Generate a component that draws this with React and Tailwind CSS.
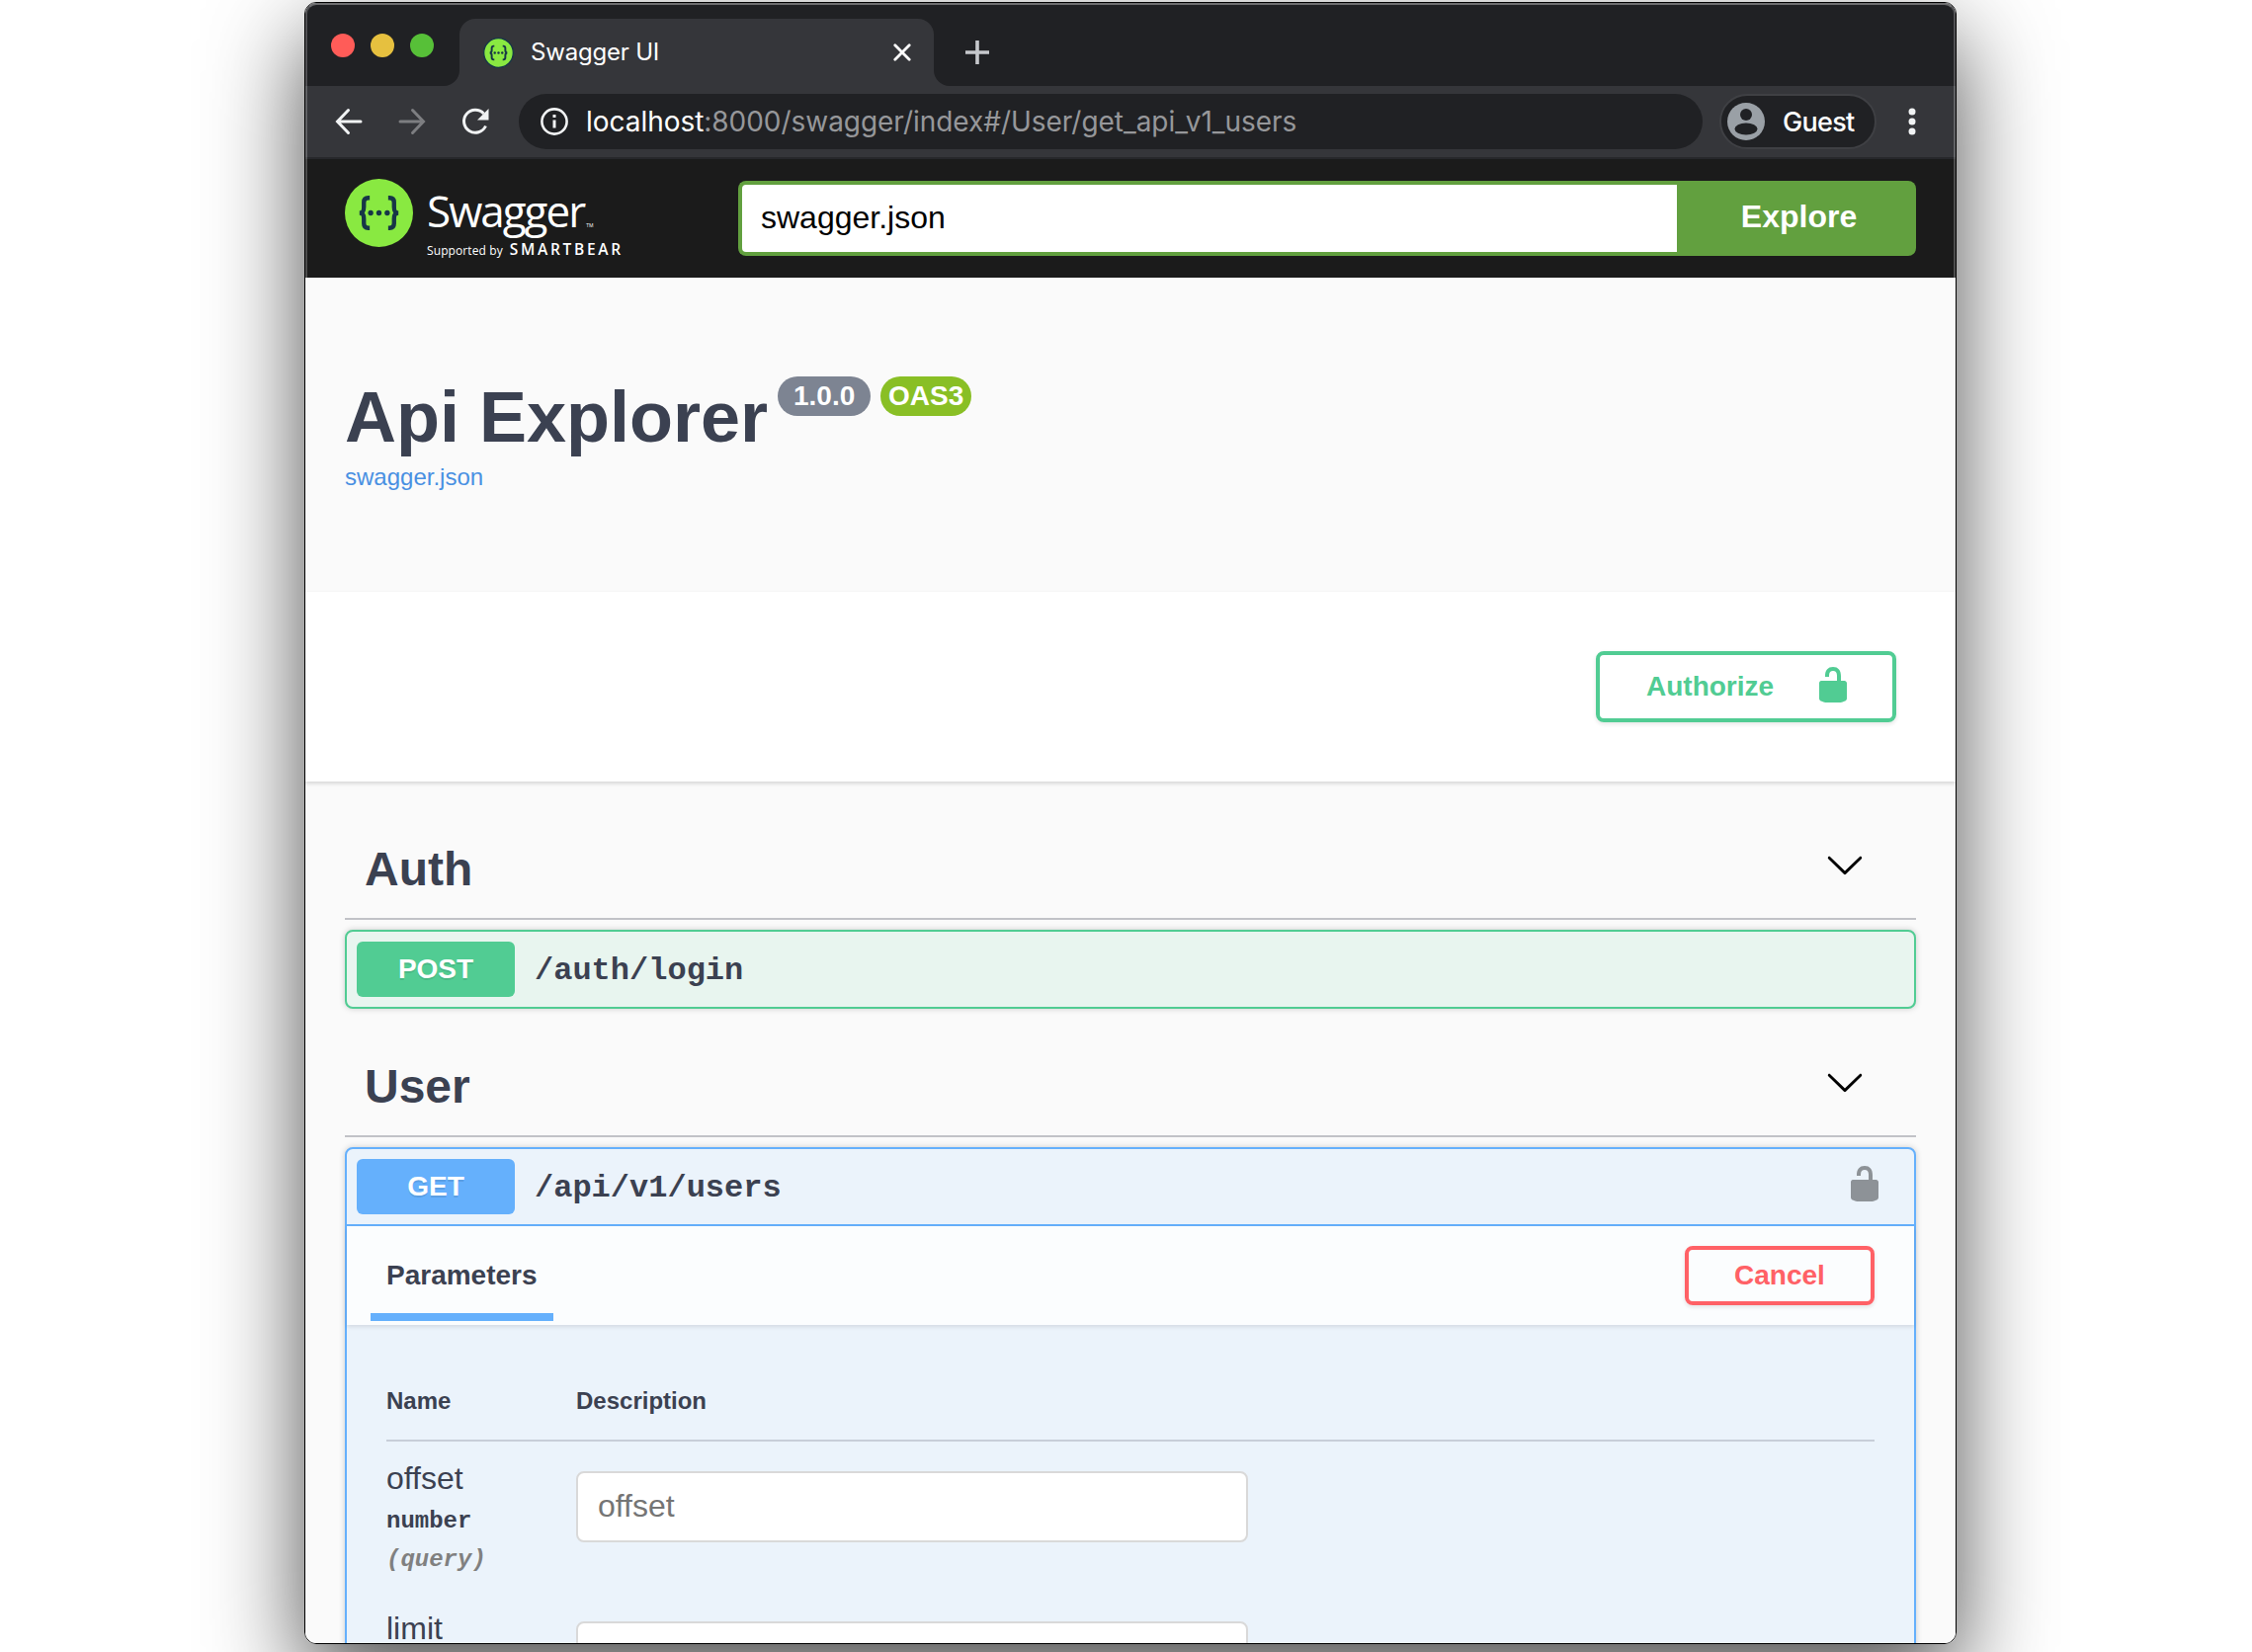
const LOCK_PATH =
  "M15.8 8H14V5.6C14 2.703 12.665 1 10 1 7.334 1 6 2.703 6 5.6V6h2v-.801C8 3.754 8.797 3 10 3c1.203 0 2 .754 2 2.199V8H4c-.553 0-1 .646-1 1.199V17c0 .549.428 1.139.951 1.307l1.197.387C5.672 18.861 6.55 19 7.1 19h5.8c.549 0 1.428-.139 1.951-.307l1.196-.387c.524-.167.953-.757.953-1.306V9.199C17 8.646 16.352 8 15.8 8z";

function Lock({ className }) {
  return (
    <svg viewBox="0 0 20 20" className={className} fill="currentColor">
      <path d={LOCK_PATH} />
    </svg>
  );
}

function Chevron() {
  return (
    <svg viewBox="0 0 20 20" className="mb-[10px] size-10" fill="black">
      <path d="M17.418 6.109c.272-.268.709-.268.979 0s.271.701 0 .969l-7.908 7.83c-.27.268-.707.268-.979 0l-7.908-7.83c-.27-.268-.27-.701 0-.969.271-.268.709-.268.979 0L10 13.25l7.418-7.141z" />
    </svg>
  );
}

function BraceMark({ className, ring }) {
  return (
    <svg viewBox="0 0 70 70" className={className}>
      <circle cx="35" cy="35" r={ring ? 33.5 : 35} fill="#89e941" stroke={ring ? "#173647" : "none"} strokeWidth={ring ? 3 : 0} />
      <g fill="none" stroke="#173647" strokeWidth="4.400">
        <path d="M25.5 19.500h-1.500c-3.500 0-4.500 2-4.500 4.500v5c0 4-1 6-4.500 6 3.500 0 4.500 2 4.500 6v5c0 2.500 1 4.500 4.500 4.500h1.500" />
        <path d="M44.500 19.500h1.500c3.500 0 4.500 2 4.500 4.500v5c0 4 1 6 4.500 6-3.500 0-4.500 2-4.500 6v5c0 2.500-1 4.500-4.500 4.500h-1.500" />
      </g>
      <g fill="#173647">
        <circle cx="26.500" cy="35" r="2.700" />
        <circle cx="35" cy="35" r="2.700" />
        <circle cx="43.500" cy="35" r="2.700" />
      </g>
    </svg>
  );
}

function TabStrip() {
  return (
    <div className="flex h-[84px] items-end bg-[#202124]">
      <div className="mb-[29px] ml-[26px] flex gap-4">
        <span className="size-6 rounded-full bg-[#ff5c58]" />
        <span className="size-6 rounded-full bg-[#e6c03f]" />
        <span className="size-6 rounded-full bg-[#57c038]" />
      </div>
      <svg viewBox="0 0 16 16" className="ml-[10px] size-4" fill="#35363a">
        <path d="M16 0v16H0A16 16 0 0 0 16 0z" />
      </svg>
      <div className="flex h-[68px] w-[480px] items-center rounded-t-2xl bg-[#35363a] pr-[23px] pl-6">
        <BraceMark className="size-[31px]" ring />
        <span className="ml-[17px] flex-1 font-['Inter'] text-[24px] tracking-[-0.2px] text-white">Swagger UI</span>
        <svg viewBox="0 0 18 18" className="size-[18px]" stroke="white" strokeWidth="2.800" strokeLinecap="round" fill="none">
          <path d="M1.800 1.800l14.400 14.400M16.200 1.800l-14.400 14.400" />
        </svg>
      </div>
      <svg viewBox="0 0 16 16" className="size-4" fill="#35363a">
        <path d="M0 0v16h16A16 16 0 0 1 0 0z" />
      </svg>
      <svg viewBox="0 0 24 24" className="mb-[22px] ml-4 size-6" stroke="#c6c8cc" strokeWidth="3.600" fill="none">
        <path d="M12 0v24M0 12h24" />
      </svg>
    </div>
  );
}

function Toolbar() {
  return (
    <div className="flex h-[74px] items-center border-b-2 border-[#27282b] bg-[#35363a]">
      <svg viewBox="0 0 28 28" className="ml-[30px] size-7" stroke="#f1f3f4" strokeWidth="3" strokeLinecap="round" fill="none">
        <path d="M26 14H3M13.500 2.500L2.500 14l11 11.500" />
      </svg>
      <svg viewBox="0 0 28 28" className="ml-[36px] size-7" stroke="#7d7e81" strokeWidth="3" strokeLinecap="round" fill="none">
        <path d="M2 14h23M14.500 2.500L25.500 14l-11 11.500" />
      </svg>
      <svg viewBox="0 0 28 28" className="ml-[36px] size-7" fill="none">
        <path d="M24.500 18.500A11.500 11.500 0 1 1 22.500 6" stroke="#f1f3f4" strokeWidth="3" />
        <path d="M27.500 1v11.500H16z" fill="#f1f3f4" />
      </svg>
      <div className="ml-[30px] flex h-14 w-[1198px] items-center rounded-full bg-[#202124] pl-[22px]">
        <svg viewBox="0 0 28 28" className="size-7" fill="none" stroke="#f1f3f4" strokeWidth="2.600">
          <circle cx="14" cy="14" r="12.600" />
          <path d="M14 12.500v8M14 7v3" strokeWidth="3" />
        </svg>
        <span className="ml-[18px] font-['Inter'] text-[28px] leading-none tracking-[-0.04px] whitespace-nowrap text-[#96979a]">
          <span className="text-white">localhost</span>:8000/swagger/index#/User/get_api_v1_users
        </span>
      </div>
      <div className="ml-[17px] flex h-14 w-[159px] items-center rounded-full border-2 border-[#3f4044] bg-[#202124] pl-[6px]">
        <svg viewBox="0 0 38 38" className="size-[38px]">
          <circle cx="19" cy="19" r="19" fill="#9aa0a6" />
          <circle cx="19" cy="12" r="6" fill="#202124" />
          <ellipse cx="19" cy="26.500" rx="11.500" ry="6" fill="#202124" />
        </svg>
        <span className="ml-[18px] pt-[2px] font-['Inter'] text-[27px] font-medium tracking-[-0.7px] text-white">Guest</span>
      </div>
      <svg viewBox="0 0 8 28" className="ml-8 h-7 w-2" fill="#f1f3f4">
        <circle cx="4" cy="4" r="3.500" />
        <circle cx="4" cy="14" r="3.500" />
        <circle cx="4" cy="24" r="3.500" />
      </svg>
    </div>
  );
}

function SwaggerBar() {
  return (
    <div className="flex h-[120px] items-start bg-[#1b1b1b] px-10">
      <BraceMark className="mt-5 size-[69px]" />
      <div className="ml-[14px] w-[315px] pt-[21px] font-['Open_Sans'] text-white">
        <div className="flex h-[62px] items-start">
          <span className="text-[44px] leading-[62px] tracking-[-2px]">Swagger</span>
          <span className="mt-[41px] ml-[2px] text-[5px] leading-[10px]">TM</span>
        </div>
        <div className="flex items-baseline leading-4 whitespace-nowrap">
          <span className="text-[12px] tracking-[0.1px]">Supported by</span>
          <span className="ml-[7px] text-[15.5px] font-semibold tracking-[2.7px]">SMARTBEAR</span>
        </div>
      </div>
      <div className="mt-[22px] flex h-[76px] flex-1">
        <div className="flex flex-1 items-center rounded-l-lg border-4 border-r-0 border-[#62a03f] bg-white pb-[3px] pl-[19px] text-[32px] text-black">
          swagger.json
        </div>
        <div className="flex w-[242px] items-center justify-center rounded-r-lg bg-[#62a03f] pb-1 pl-[5px] text-[32px] font-bold text-white">
          Explore
        </div>
      </div>
    </div>
  );
}

function SectionHeader({ title }) {
  return (
    <div className="flex h-[100px] items-center justify-between border-b-2 border-[#c1c2c7] pr-[52px] pl-5">
      <h2 className="text-[48px] leading-none font-bold">{title}</h2>
      <Chevron />
    </div>
  );
}

function Method({ label, className }) {
  return (
    <span className={"flex h-14 w-40 items-center justify-center rounded-md text-[28px] font-bold text-white [text-shadow:0_2px_0_rgba(0,0,0,0.1)] " + className}>
      {label}
    </span>
  );
}

function ParamRow({ name, type, location }) {
  return (
    <div className="flex h-[152px]">
      <div className="w-48 pt-[15px]">
        <div className="text-[32px] leading-[44px]">{name}</div>
        {type && <div className="font-['Liberation_Mono',monospace] text-[24px] leading-[44px] font-bold">{type}</div>}
        {location && <div className="font-['Liberation_Mono',monospace] text-[24px] leading-[34px] font-bold text-[#808080] italic">{location}</div>}
      </div>
      <div className="mt-[30px] flex h-[72px] w-[680px] items-center rounded-lg border-2 border-[#d9d9d9] bg-white pb-[2px] pl-5 text-[32px] text-[#757575]">
        {type && name}
      </div>
    </div>
  );
}

export default function App() {
  return (
    <div className="h-[1672px] w-full overflow-hidden bg-white pt-[2px] pl-[308px] font-['Liberation_Sans',Arial,sans-serif] text-[#3b4151]">
      <div className="relative h-[1662px] w-[1672px] rounded-xl border border-black shadow-[0_36px_96px_rgba(0,0,0,0.7)]">
        <div className="h-full overflow-hidden rounded-[11px] bg-[#fafafa]">
          <TabStrip />
          <Toolbar />
          <SwaggerBar />

          <div className="h-[318px] px-10 pt-[99px]">
            <div className="flex items-start">
              <h1 className="text-[72px] leading-[84px] font-bold whitespace-nowrap">Api Explorer</h1>
              <span className="mt-px ml-[10px] flex h-10 w-[94px] items-center justify-center rounded-full bg-[#7d8492] text-[28px] font-bold text-white">1.0.0</span>
              <span className="mt-px ml-[10px] flex h-10 w-[92px] items-center justify-center rounded-full bg-[#89bf25] text-[28px] font-bold text-white">OAS3</span>
            </div>
            <a className="block pt-px text-[24px] leading-[36px] text-[#4990e2]">swagger.json</a>
          </div>

          <div className="flex h-48 items-center justify-end bg-white pr-[60px] shadow-[0_2px_4px_rgba(0,0,0,0.15)]">
            <div className="flex h-[72px] w-[304px] items-center justify-between rounded-lg border-4 border-[#51cc93] pr-10 pl-[47px] text-[28px] font-bold text-[#51cc93] shadow-[0_2px_4px_rgba(0,0,0,0.1)]">
              <span>Authorize</span>
              <Lock className="mb-1 size-10" />
            </div>
          </div>

          <div className="px-10 pt-10">
            <SectionHeader title="Auth" />
            <div className="mt-[10px] mb-[30px] flex h-20 items-center rounded-lg border-2 border-[#51cc93] bg-[#e8f5ef] pl-[10px] shadow-[0_0_6px_rgba(0,0,0,0.19)]">
              <Method label="POST" className="bg-[#51cc93]" />
              <span className="ml-5 pt-1 font-['Liberation_Mono',monospace] text-[32px] font-bold">/auth/login</span>
            </div>

            <SectionHeader title="User" />
            <div className="mt-[10px] h-[700px] rounded-lg border-2 border-[#65b0fc] bg-[#ebf3fb] shadow-[0_0_6px_rgba(0,0,0,0.19)]">
              <div className="flex h-[78px] items-center border-b-2 border-[#65b0fc] pr-[30px] pl-[10px]">
                <Method label="GET" className="bg-[#65b0fc]" />
                <span className="ml-5 flex-1 pt-[3px] font-['Liberation_Mono',monospace] text-[32px] font-bold">/api/v1/users</span>
                <Lock className="mb-[6px] size-10 text-[#8d9297]" />
              </div>

              <div className="flex h-[100px] items-center justify-between bg-[#fbfdfe] pr-10 pl-6 shadow-[0_2px_4px_rgba(0,0,0,0.1)]">
                <div className="flex h-full w-[185px] flex-col pb-1">
                  <div className="flex flex-1 items-center pt-3 pl-4 text-[28px] font-bold">Parameters</div>
                  <div className="h-2 bg-[#65b0fc]" />
                </div>
                <div className="flex h-[60px] w-48 items-center justify-center rounded-lg border-4 border-[#ff6166] text-[28px] font-bold text-[#ff6166] shadow-[0_2px_4px_rgba(0,0,0,0.1)]">
                  Cancel
                </div>
              </div>

              <div className="px-10 pt-[38px]">
                <div className="flex h-20 items-center border-b-2 border-[#c7ced8] text-[24px] font-bold">
                  <span className="w-48">Name</span>
                  <span>Description</span>
                </div>
                <ParamRow name="offset" type="number" location="(query)" />
                <ParamRow name="limit" />
              </div>
            </div>
          </div>
        </div>
        <div className="pointer-events-none absolute inset-x-0 top-0 h-[278px] rounded-t-[11px] border-x-2 border-t-2 border-x-[#ffffff38] border-t-[#ffffff58]" />
      </div>
    </div>
  );
}
